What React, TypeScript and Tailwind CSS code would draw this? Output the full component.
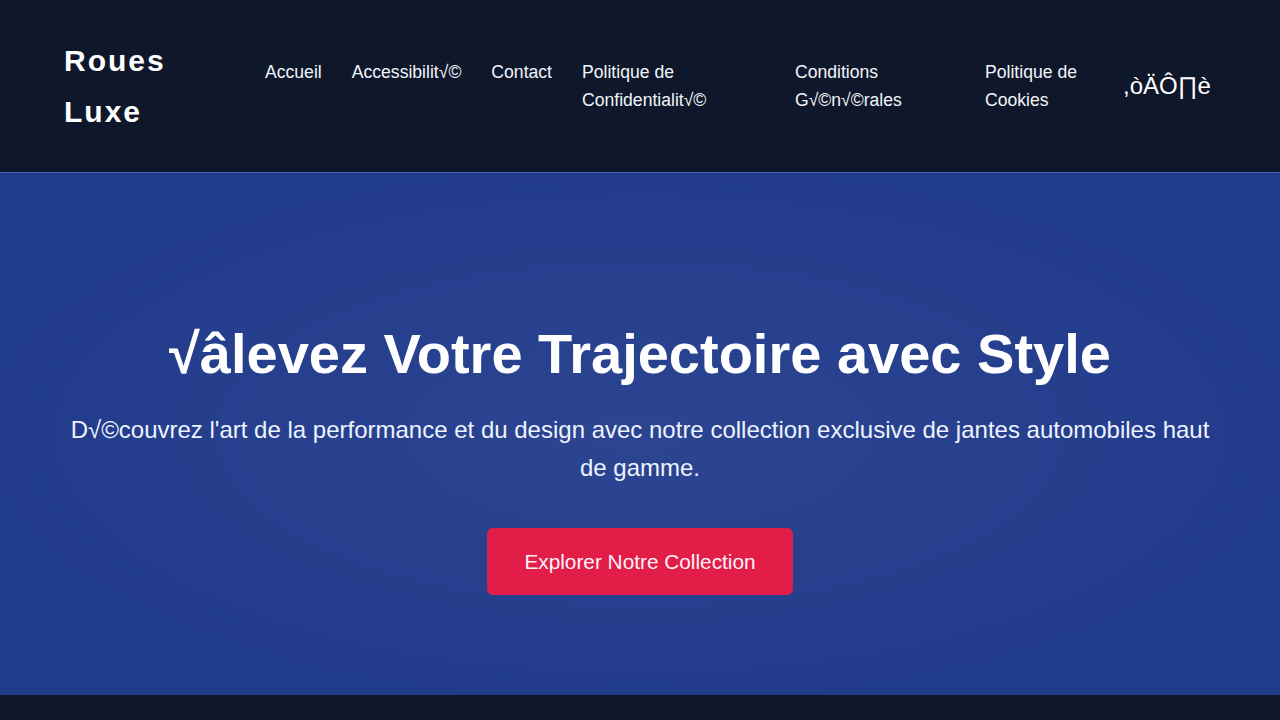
import React from "react";

const font = { fontFamily: '"Liberation Sans", Arial, sans-serif' };

export default function App() {
  return (
    <div className="min-h-[720px] bg-[#0f172a] text-white" style={font}>
      <header className="flex items-center border-b border-[#3b66c4] bg-[#0f172a] pl-16 pr-[70px] h-[173px]">
        <div className="w-[160px] shrink-0 text-[30px] font-bold leading-[51px] tracking-[2px] text-white">
          Roues Luxe
        </div>
        <nav className="ml-[41px] flex flex-1 items-center">
          <ul className="flex items-start gap-[30px] text-[17.6px] leading-[28px] text-[#f1f5f9]">
            <li>Accueil</li>
            <li>Accessibilit√©</li>
            <li>Contact</li>
            <li className="w-[183px]">Politique de Confidentialit√©</li>
            <li className="w-[160px]">Conditions G√©n√©rales</li>
            <li className="w-[108px]">Politique de Cookies</li>
          </ul>
          <span className="ml-[30px] text-[24px] leading-[28px] text-white">,òÄÔ∏è</span>
        </nav>
      </header>
      <section className="bg-[#213b8b] bg-[radial-gradient(ellipse_at_center,rgba(255,255,255,0.05)_0%,rgba(255,255,255,0.02)_50%,transparent_75%)] px-16 pt-[147px] pb-[100px] text-center">
        <h1 className="text-[56px] font-bold leading-[67px] text-white">
          √âlevez Votre Trajectoire avec Style
        </h1>
        <p className="mt-[24px] text-[24px] leading-[38px] text-[#eef2ff]">
          D√©couvrez l'art de la performance et du design avec notre collection exclusive de jantes automobiles haut de gamme.
        </p>
        <button className="mt-[41px] rounded-md bg-[#e11d48] px-[37px] py-[19px] text-[20.8px] leading-[29px] text-[#fdf2f8]">
          Explorer Notre Collection
        </button>
      </section>
      <div className="h-[26px] bg-[#0f172a]" />
    </div>
  );
}
